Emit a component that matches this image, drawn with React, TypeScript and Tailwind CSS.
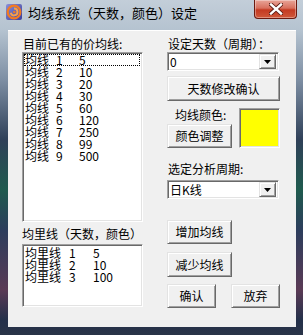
import React from "react";

const font = { fontFamily: '"Noto Sans CJK SC", "Noto Sans", sans-serif' };

function Btn({ children, className = "" }: { children: React.ReactNode; className?: string }) {
  return (
    <div
      className={
        "flex items-center justify-center bg-[#f0f0f0] border border-t-[#e3e3e3] border-l-[#e3e3e3] border-r-[#696969] border-b-[#696969] shadow-[inset_1px_1px_0_#ffffff,inset_-1px_-1px_0_#a0a0a0] text-[12px] leading-[12px] text-black " +
        className
      }
    >
      {children}
    </div>
  );
}

function Sunken({ children, className = "" }: { children?: React.ReactNode; className?: string }) {
  return (
    <div
      className={
        "border border-t-[#a0a0a0] border-l-[#a0a0a0] border-r-white border-b-white shadow-[inset_1px_1px_0_#696969,inset_-1px_-1px_0_#e3e3e3] " +
        className
      }
    >
      {children}
    </div>
  );
}

function Combo({ value }: { value: string }) {
  return (
    <Sunken className="h-[19px] w-[112px] bg-white flex items-center pl-[2px] pr-[2px]">
      <span className="text-[12px] leading-[12px] flex-1">{value}</span>
      <div className="w-[17px] h-[15px] flex items-center justify-center bg-[#f0f0f0] border border-t-[#e3e3e3] border-l-[#e3e3e3] border-r-[#696969] border-b-[#696969] shadow-[inset_1px_1px_0_#ffffff,inset_-1px_-1px_0_#a0a0a0]">
        <svg width="7" height="4" viewBox="0 0 7 4">
          <polygon points="0,0 7,0 3.5,4" fill="#000" />
        </svg>
      </div>
    </Sunken>
  );
}

export default function App() {
  const list1: [number, number][] = [
    [1, 5],
    [2, 10],
    [3, 20],
    [4, 30],
    [5, 60],
    [6, 120],
    [7, 250],
    [8, 99],
    [9, 500],
  ];
  const list2: [number, number][] = [
    [1, 5],
    [2, 10],
    [3, 100],
  ];
  return (
    <div
      style={font}
      className="w-[303px] h-[335px] flex flex-col overflow-hidden bg-[linear-gradient(to_bottom,#c3ced9_0px,#b5c3d0_30px,#7d8ea3_80px,#2f4058_140px,#1f5a4e_190px,#2c3d5c_230px,#5a3a55_290px,#24304a_320px,#2a3448_335px)] text-black"
    >
      {/* Title bar */}
      <div className="h-[30px] flex items-start shrink-0">
        <div className="mt-[4px] ml-[6px] w-[16px] h-[16px]">
          <svg width="16" height="16" viewBox="0 0 16 16">
            <defs>
              <linearGradient id="ig" x1="0" y1="0" x2="1" y2="1">
                <stop offset="0" stopColor="#8a8fd8" />
                <stop offset="1" stopColor="#3b3f9a" />
              </linearGradient>
            </defs>
            <rect x="0" y="0" width="16" height="16" rx="2" fill="url(#ig)" />
            <circle cx="8" cy="8" r="6.3" fill="none" stroke="#f47a1f" strokeWidth="2.2" />
            <path d="M8 4.6 A3.4 3.4 0 1 1 4.8 8.8" fill="none" stroke="#f6a04a" strokeWidth="2" />
            <circle cx="8.3" cy="8" r="1.3" fill="#f47a1f" />
          </svg>
        </div>
        <div className="ml-[6px] mt-[6px] text-[13px] leading-[14px] text-black">
          均线系统（天数，颜色）设定
        </div>
        <div className="ml-auto mr-[6px] w-[43px] h-[19px] rounded-b-[4px] border border-t-0 border-[#6b1a10] bg-[linear-gradient(to_bottom,#e8a598_0%,#d8705e_45%,#c43a22_55%,#d0583a_100%)] flex items-center justify-center shadow-[inset_0_0_0_1px_rgba(255,255,255,0.35)]">
          <svg width="14" height="12" viewBox="0 0 14 12">
            <path d="M2 1.5 L12 10.5 M12 1.5 L2 10.5" stroke="#5a1a12" strokeWidth="4.2" strokeLinecap="square" />
            <path d="M2 1.5 L12 10.5 M12 1.5 L2 10.5" stroke="#ffffff" strokeWidth="2.4" strokeLinecap="square" />
          </svg>
        </div>
      </div>

      {/* Client area */}
      <div className="ml-[8px] mr-[7px] mb-[8px] flex-1 bg-[#f0f0f0] border-t border-t-white flex pl-[14px] pt-[5px]">
        {/* Left column */}
        <div className="w-[121px] flex flex-col">
          <div className="h-[16px] text-[12px] leading-[16px] pl-[1px]">目前已有的价均线:</div>
          <Sunken className="h-[170px] bg-white pt-[1px] pl-[1px] pr-[2px]">
            {list1.map(([n, v], i) => (
              <div
                key={n}
                className={
                  "h-[12px] flex text-[12px] leading-[12px] " +
                  (i === 0 ? "outline-1 outline-dotted outline-black -outline-offset-1" : "")
                }
              >
                <span className="w-[32px] pl-[1px]">均线</span>
                <span className="w-[23px]">{n}</span>
                <span>{v}</span>
              </div>
            ))}
          </Sunken>
          <div className="mt-[4px] h-[16px] text-[12px] leading-[16px]">均里线（天数，颜色）</div>
          <Sunken className="mt-[2px] h-[63px] bg-white pt-[2px] pl-[2px]">
            {list2.map(([n, v]) => (
              <div key={n} className="h-[12px] flex text-[12px] leading-[12px]">
                <span className="w-[44px]">均里线</span>
                <span className="w-[24px]">{n}</span>
                <span>{v}</span>
              </div>
            ))}
          </Sunken>
        </div>

        {/* Right column */}
        <div className="ml-[24px] w-[113px] flex flex-col">
          <div className="h-[16px] text-[12px] leading-[16px] pl-[1px]">设定天数（周期）：</div>
          <Combo value="0" />
          <Btn className="mt-[5px] h-[25px] w-[113px]">天数修改确认</Btn>
          <div className="mt-[7px] flex">
            <div className="w-[65px] flex flex-col">
              <div className="h-[14px] text-[12px] leading-[14px] pl-[8px]">均线颜色:</div>
              <Btn className="mt-[2px] h-[24px] w-[65px]">颜色调整</Btn>
            </div>
            <Sunken className="ml-[7px] w-[41px] h-[40px] bg-[#ffff00]" />
          </div>
          <div className="mt-[13px] h-[16px] text-[12px] leading-[16px] pl-[1px]">选定分析周期:</div>
          <div className="mt-[3px]">
            <Combo value="日K线" />
          </div>
          <Btn className="mt-[21px] h-[24px] w-[65px]">增加均线</Btn>
          <Btn className="mt-[8px] h-[25px] w-[65px]">减少均线</Btn>
          <div className="mt-[7px] flex">
            <Btn className="h-[24px] w-[49px]">确认</Btn>
            <Btn className="ml-[15px] h-[24px] w-[49px]">放弃</Btn>
          </div>
        </div>
      </div>
    </div>
  );
}
